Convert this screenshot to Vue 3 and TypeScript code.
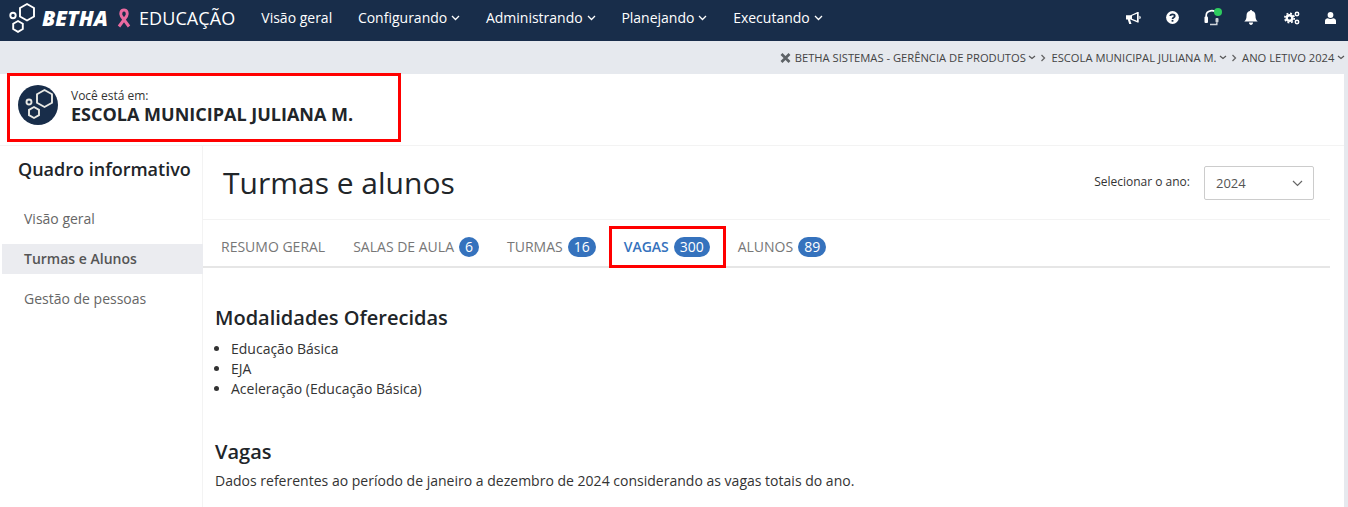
<script setup lang="ts">
const navItems = [
  { label: 'Visão geral', caret: false },
  { label: 'Configurando', caret: true },
  { label: 'Administrando', caret: true },
  { label: 'Planejando', caret: true },
  { label: 'Executando', caret: true },
]
const tabs = [
  { label: 'RESUMO GERAL', badge: '', active: false },
  { label: 'SALAS DE AULA', badge: '6', active: false },
  { label: 'TURMAS', badge: '16', active: false },
  { label: 'VAGAS', badge: '300', active: true },
  { label: 'ALUNOS', badge: '89', active: false },
]
</script>

<template>
  <div class="page">
    <header class="topnav">
      <div class="brand">
        <svg class="logo" width="36" height="32" viewBox="0 0 36 32" fill="none" stroke="#fff" stroke-width="1.9">
          <path d="M27 2l7 4v8.500l-7 4-7-4V6z" />
          <path d="M18 19l4.800 2.700v5.300L18 29.800l-4.800-2.800v-5.300z" />
          <circle cx="13" cy="13.500" r="2.700" />
        </svg>
        <span class="betha">BETHA</span>
        <svg class="ribbon" width="16" height="20" viewBox="0 0 16 20" fill="none" stroke="#ea6aa0" stroke-width="3">
          <path d="M3 18.500L10.600 8.200C12 6 11.200 2 8 2S4 6 5.400 8.200L13 18.500" />
        </svg>
        <span class="product">EDUCAÇÃO</span>
      </div>
      <nav class="menu">
        <a v-for="item in navItems" :key="item.label" class="menu-item">
          {{ item.label }}
          <svg v-if="item.caret" width="9" height="6" viewBox="0 0 9 6" fill="none" stroke="#fff" stroke-width="1.300"><path d="M1 1l3.500 3.500L8 1" /></svg>
        </a>
      </nav>
      <div class="tools">
        <svg width="15" height="12" viewBox="0 0 15 12" fill="#fff">
          <path d="M0 3.200h4.500L11.500 0h1.200v10.400h-1.200L4.500 7.600H4L5.500 12H3.200L1.800 7.600H0z" />
          <path d="M6 3.700L11 1.800v6.900L6 6.800z" fill="#182d4a" />
          <path d="M13.400 3.700c1.800.4 1.800 3 0 3.400z" />
        </svg>
        <svg width="13" height="13" viewBox="0 0 13 13">
          <circle cx="6.500" cy="6.500" r="6.400" fill="#fff" />
          <path d="M4.200 5C4.400 2.700 8.800 2.700 8.800 5c0 1.500-2.300 1.500-2.300 3" fill="none" stroke="#182d4a" stroke-width="1.700" />
          <rect x="5.600" y="8.900" width="1.800" height="1.800" fill="#182d4a" />
        </svg>
        <span class="support">
          <svg width="15" height="17" viewBox="0 0 15 17" fill="none" stroke="#fff">
            <path d="M2.200 9V6.500C2.200 1 10.500.2 12.500 4.500" stroke-width="1.700" />
            <rect x=".5" y="7.500" width="3.500" height="6.500" rx="1" fill="#fff" stroke="none" />
            <rect x="11.500" y="9" width="3" height="4.500" rx="1" fill="#cfd4da" stroke="none" />
            <path d="M12.800 13.500v2H6" stroke-width="1.500" stroke="#cfd4da" />
          </svg>
          <i class="online"></i>
        </span>
        <svg class="bell" width="14" height="15" viewBox="0.500 0 13 14.500" fill="#fff"><path d="M7 0c.7 0 1 .5 1 1 2.200.5 3.300 2.200 3.300 4.200 0 3.200.8 4.600 2.200 6H.5c1.400-1.400 2.200-2.800 2.200-6C2.700 3.200 3.800 1.500 6 1c0-.5.3-1 1-1zM5 12.200h4c0 1.600-1 2.300-2 2.300s-2-.7-2-2.300z" /></svg>
        <svg width="16" height="14" viewBox="0 0 16 14" fill="none" stroke="#fff">
          <circle cx="5.500" cy="7" r="2.800" stroke-width="2.400" />
          <circle cx="5.500" cy="7" r="4.700" stroke-width="1.700" stroke-dasharray="1.900 1.790" />
          <circle cx="13" cy="3" r="1.700" stroke-width="1.500" />
          <circle cx="13" cy="11" r="1.700" stroke-width="1.500" />
        </svg>
        <svg width="11" height="12" viewBox="0 0 11 12" fill="#fff"><ellipse cx="5.500" cy="3" rx="2.900" ry="3" /><path d="M0 12V8.700C0 7.200 1.400 6.500 2.800 6.200c1.500 1 3.900 1 5.400 0 1.400.3 2.800 1 2.800 2.500V12z" /></svg>
      </div>
    </header>

    <div class="crumbs">
      <svg width="11" height="10" viewBox="0 0 11 10" stroke="#5d6266" stroke-width="2.700"><path d="M1.500 1l8 8M9.500 1l-8 8" /></svg>
      <span class="first">BETHA SISTEMAS - GERÊNCIA DE PRODUTOS</span>
      <svg class="c" width="8" height="5" viewBox="0 0 8 5" fill="none" stroke="#555" stroke-width="1.200"><path d="M1 1l3 2.500L7 1" /></svg>
      <svg class="s" width="6" height="8" viewBox="0 0 6 8" fill="none" stroke="#666" stroke-width="1.300"><path d="M1.500 1l3 3-3 3" /></svg>
      <span>ESCOLA MUNICIPAL JULIANA M.</span>
      <svg class="c" width="8" height="5" viewBox="0 0 8 5" fill="none" stroke="#555" stroke-width="1.200"><path d="M1 1l3 2.500L7 1" /></svg>
      <svg class="s" width="6" height="8" viewBox="0 0 6 8" fill="none" stroke="#666" stroke-width="1.300"><path d="M1.500 1l3 3-3 3" /></svg>
      <span>ANO LETIVO 2024</span>
      <svg class="c" width="8" height="5" viewBox="0 0 8 5" fill="none" stroke="#555" stroke-width="1.200"><path d="M1 1l3 2.500L7 1" /></svg>
    </div>

    <main class="panel">
      <section class="context">
        <div class="context-box">
          <span class="avatar">
            <svg width="40" height="40" viewBox="0 0 40 40" fill="none" stroke="#e8e8e4" stroke-width="1.900">
              <path d="M26.500 5l7.500 4.200v8.600L26.500 22 19 17.800V9.200z" />
              <path d="M16 22l5 2.800v5.400L16 33l-5-2.800v-5.400z" />
              <circle cx="11" cy="17" r="2.500" />
            </svg>
          </span>
          <div class="context-text">
            <small>Você está em:</small>
            <strong>ESCOLA MUNICIPAL JULIANA M.</strong>
          </div>
        </div>
      </section>

      <div class="columns">
        <aside class="side">
          <h2>Quadro informativo</h2>
          <ul>
            <li>Visão geral</li>
            <li class="current">Turmas e Alunos</li>
            <li>Gestão de pessoas</li>
          </ul>
        </aside>
        <section class="content">
          <div class="title-row">
            <h1>Turmas e alunos</h1>
            <div class="year">
              <label>Selecionar o ano:</label>
              <div class="select">
                <span>2024</span>
                <svg width="11" height="7" viewBox="0 0 11 7" fill="none" stroke="#666" stroke-width="1.200"><path d="M1 1l4.500 4.500L10 1" /></svg>
              </div>
            </div>
          </div>
          <div class="tabs">
            <div v-for="t in tabs" :key="t.label" class="tab" :class="{ active: t.active }">
              {{ t.label }}<b v-if="t.badge">{{ t.badge }}</b>
            </div>
          </div>
          <div class="body">
            <h3>Modalidades Oferecidas</h3>
            <ul>
              <li>Educação Básica</li>
              <li>EJA</li>
              <li>Aceleração (Educação Básica)</li>
            </ul>
            <h3 class="second">Vagas</h3>
            <p>Dados referentes ao período de janeiro a dezembro de 2024 considerando as vagas totais do ano.</p>
          </div>
        </section>
      </div>
    </main>
  </div>
</template>

<style>
html, body { margin: 0; background: #e6e9ee; }
</style>

<style scoped>
.page { width: 1348px; height: 507px; overflow: hidden; font-family: "Open Sans", sans-serif; color: #212529; background: #e6e9ee; }
.topnav { height: 41px; box-sizing: border-box; padding-bottom: 6px; background: #182d4a; display: flex; align-items: center; color: #fff; }
.brand { display: flex; align-items: center; width: 248px; flex: none; }
.logo { flex: none; }
.betha { margin-left: 6px; font: italic 800 21px "Open Sans", sans-serif; }
.ribbon { margin-left: 8px; flex: none; }
.product { margin-left: 7px; font-size: 18px; letter-spacing: .1px; }
.menu { display: flex; gap: 25.700px; margin-left: 13.300px; }
.menu-item { font-size: 14px; display: flex; align-items: center; gap: 4px; }
.tools { margin-left: auto; display: flex; align-items: center; gap: 25px; padding-right: 12px; }
.tools > svg, .support { display: block; }
.tools .bell { margin-right: 1px; }
.support { position: relative; height: 17px; width: 15px; }
.online { position: absolute; left: 10px; top: -1px; width: 8px; height: 8px; border-radius: 50%; background: #2ecc5f; }
.crumbs { height: 33px; display: flex; align-items: center; justify-content: flex-end; padding-right: 3px; font-size: 11.200px; color: #444; }
.crumbs span { margin-left: 5px; }
.crumbs span.first { margin-left: 4px; }
.crumbs .c { margin-left: 2.600px; }
.crumbs .s { margin-left: 4px; }
.panel { width: 1344px; height: 433px; background: #fff; display: flex; flex-direction: column; }
.context { height: 72px; flex: none; border-bottom: 1px solid #f3f3f3; box-sizing: border-box; }
.context-box { position: relative; margin: -1px 0 0 7px; width: 394px; height: 69px; box-sizing: border-box; border: 3px solid #f00; display: flex; align-items: center; padding: 0 0 5px 8px; }
.avatar { width: 40px; height: 40px; border-radius: 50%; background: #182d4a; flex: none; }
.context-text { margin: 4px 0 0 13px; display: flex; flex-direction: column; }
.context-text small { font-size: 12px; line-height: 14px; margin: 1px 0 -1px; color: #333; }
.context-text strong { font-size: 18px; line-height: 24px; color: #212529; }
.columns { display: flex; flex: 1; min-height: 0; }
.side { width: 203px; box-sizing: border-box; flex: none; border-right: 1px solid #f3f3f3; }
.side h2 { margin: 10px 0 22px 18px; font-size: 18px; line-height: 26px; font-weight: 600; color: #212529; white-space: nowrap; }
.side ul { list-style: none; margin: 0 0 0 2px; padding: 0; }
.side li { height: 30px; line-height: 30px; margin-bottom: 10px; padding-left: 22px; font-size: 14px; color: #666; }
.side li.current { background: #ebecf0; font-weight: 600; color: #555; margin-right: -1px; position: relative; }
.content { flex: 1; min-width: 0; margin-right: 14px; }
.title-row { height: 73px; display: flex; align-items: center; justify-content: space-between; border-bottom: 1px solid #f3f3f3; }
.title-row h1 { margin: 0 0 0 20px; font-size: 30px; font-weight: 400; color: #212529; }
.year { display: flex; align-items: center; margin: 1px 16px 0 0; }
.year label { font-size: 12px; color: #333; margin-right: 14px; margin-top: -4px; }
.select { width: 110px; height: 34px; box-sizing: border-box; border: 1px solid #ccc; border-radius: 2px; display: flex; align-items: center; justify-content: space-between; padding: 0 10px 0 11px; font-size: 13px; color: #555; }
.tabs { height: 46px; display: flex; align-items: flex-start; border-bottom: 2px solid #e6e6e6; }
.tab { box-sizing: border-box; height: 42px; margin-top: 6px; padding: 0 14px 1px; display: flex; align-items: center; font-size: 14px; color: #777; }
.tab:first-child { padding-left: 18px; }
.tab b { margin-left: 5px; min-width: 20px; height: 20px; padding: 0 6px; box-sizing: border-box; display: block; text-align: center; line-height: 20px; border-radius: 10px; background: #3572bd; color: #fff; font-weight: 400; font-size: 14px; }
.tab.active { border: 3px solid #f00; color: #3572bd; font-weight: 600; padding: 0 12px 1px; width: 117px; margin-left: -1px; margin-right: -2px; }
.body { padding: 0 12px; }
.body h3 { margin: 36px 0 0; font-size: 20px; line-height: 28px; font-weight: 600; color: #212529; }
.body ul { margin: 7px 0 0; padding-left: 16px; font-size: 14px; line-height: 20px; color: #333; }
.body h3.second { margin-top: 39px; }
.body p { margin: 5px 0 0; font-size: 14px; line-height: 20px; color: #333; letter-spacing: .01px; }
</style>
